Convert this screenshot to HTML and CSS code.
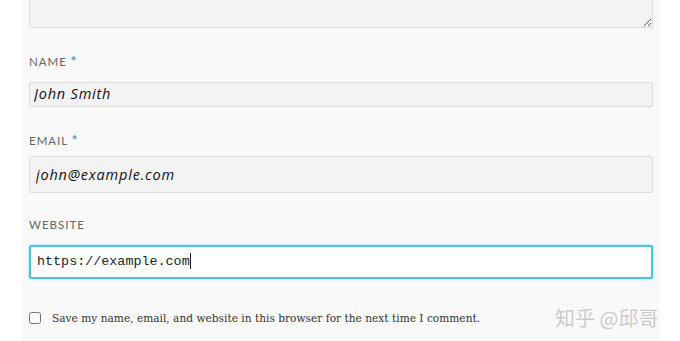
FILE: index.html
```html
<!DOCTYPE html>
<html lang="en">
<head>
<meta charset="UTF-8" />
<title>Leave a comment</title>
<link rel="stylesheet" href="styles.css">
</head>
<body>

<form class="comment-form">
  <textarea class="comment-box"></textarea>

  <div class="field field-name">
    <label for="author">Name <span class="required">*</span></label>
    <input type="text" id="author" class="input input-name" value="John Smith" />
  </div>

  <div class="field field-email">
    <label for="email">Email <span class="required">*</span></label>
    <input type="text" id="email" class="input input-email" value="john@example.com" />
  </div>

  <div class="field field-url">
    <label for="url">Website</label>
    <div class="input input-url">https://example.com<span class="caret"></span></div>
  </div>

  <div class="cookies">
    <input type="checkbox" id="cookies" />
    <label for="cookies">Save my name, email, and website in this browser for the next time I comment.</label>
  </div>
</form>

<div class="watermark">知乎 @邱哥</div>

</body>
</html>
```

FILE: styles.css
```css
body {
  margin: 0;
  background: #fff;
  overflow: hidden;
}
.comment-form {
  margin: 0 20px 0 22px;
  padding: 0 7px 40px;
  background: #f9f9f9;
}
.comment-box {
  display: block;
  box-sizing: border-box;
  width: 100%;
  height: 68px;
  margin: -40px 0 0;
  background: #f3f3f3;
  border: 1px solid #dcdcdc;
  border-radius: 2px;
}
.field label {
  display: block;
  font-family: Lato, "Open Sans", sans-serif;
  font-size: 11.5px;
  letter-spacing: 1px;
  text-transform: uppercase;
  color: #666;
  line-height: 14px;
}
.required {
  color: #4a94d0;
  font-size: 13px;
  font-weight: bold;
  line-height: 0;
}
.field-name label {
  margin-top: 27px;
}
.field-email label {
  margin-top: 27px;
}
.field-url label {
  margin-top: 25px;
}
.input {
  display: block;
  box-sizing: border-box;
  width: 100%;
  padding: 0 4px;
  background: #f3f3f3;
  border: 1px solid #dcdcdc;
  border-radius: 2px;
  color: #111;
  font-family: "Open Sans", sans-serif;
  font-style: italic;
  font-size: 14.5px;
  letter-spacing: 0.8px;
}
.input-name {
  height: 25px;
  margin-top: 13px;
  padding-bottom: 2px;
}
.input-email {
  height: 37px;
  margin-top: 8px;
  padding-left: 6px;
}
.input-url {
  height: 34px;
  margin-top: 13px;
  padding: 0 6px;
  background: #fff;
  border: 2px solid #4cc4dc;
  box-shadow: 0 0 3px #8fdcec;
  font-family: "Liberation Mono", monospace;
  font-style: normal;
  font-size: 13.4px;
  letter-spacing: 0;
  line-height: 30px;
  color: #222;
}
.caret {
  display: inline-block;
  width: 1px;
  height: 16px;
  background: #222;
  vertical-align: middle;
}
.cookies {
  display: flex;
  align-items: center;
  gap: 11px;
  margin-top: 32px;
}
.cookies input {
  margin: 0;
  width: 12px;
  height: 12px;
}
.cookies label {
  font-family: "DejaVu Serif", serif;
  font-stretch: condensed;
  font-size: 11.8px;
  color: #333;
}
.watermark {
  position: absolute;
  left: 555px;
  top: 303px;
  font-family: "Noto Sans CJK SC", sans-serif;
  font-size: 20px;
  color: rgba(170, 170, 170, 0.6);
}
```
